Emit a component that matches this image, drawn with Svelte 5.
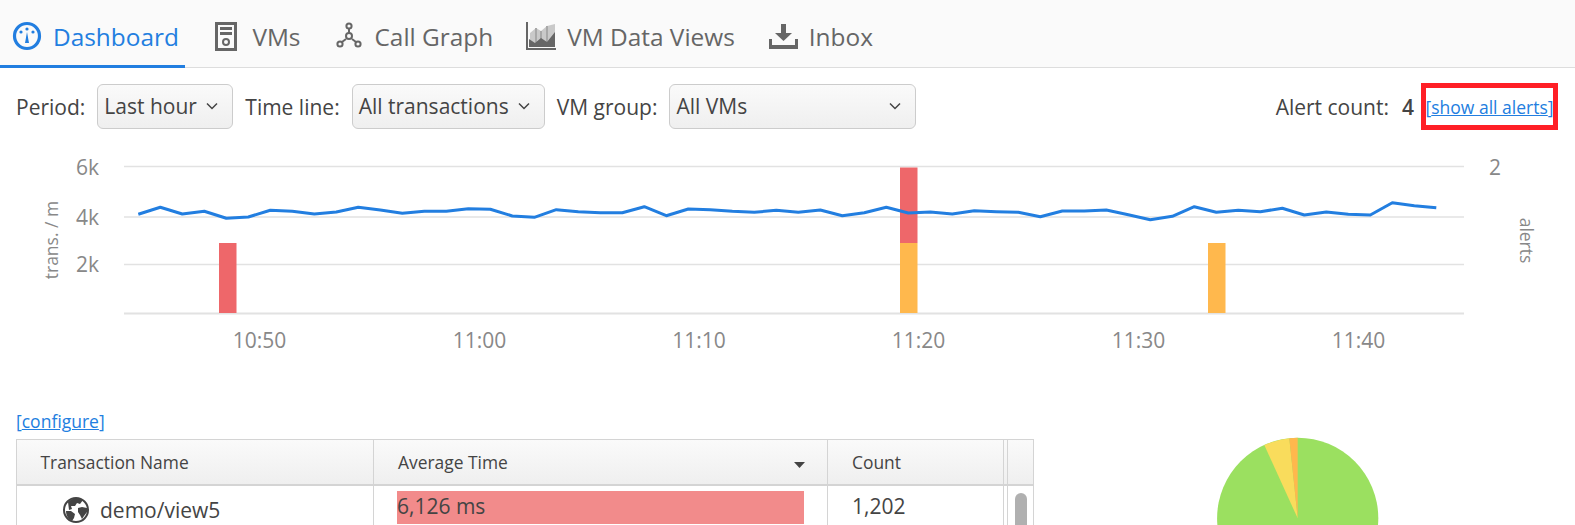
<script lang="ts">
	const tabs = ['Dashboard', 'VMs', 'Call Graph', 'VM Data Views', 'Inbox'];

	// sampled every minute, in page pixels
	const ys = [
		214.3, 207.3, 214, 211.3, 218.3, 217, 210.3, 211.3, 214, 212, 207.3, 210, 213.3, 211.3, 211.3,
		208.7, 209.3, 216, 217.3, 209.7, 211.7, 212.7, 212.7, 206.7, 215.7, 209, 209.7, 211.3, 212.3,
		210.3, 212.3, 210, 215.7, 212.7, 207.3, 213, 212, 214, 210.7, 211.7, 212.3, 216.7, 211, 211,
		210, 214.7, 219.7, 216.3, 206.7, 212.3, 210.3, 211.7, 208.3, 215, 212, 214.3, 215, 202.7,
		205.7, 207.7,
	];
	const points = ys.map((y, i) => `${(138.3 + i * 22).toFixed(1)},${y}`).join(' ');

	const grid = [166.5, 217, 264.5, 313.5];
	const yLabels = [
		{ t: '6k', y: 175 },
		{ t: '4k', y: 225 },
		{ t: '2k', y: 272 },
	];
	const xLabels = [
		{ t: '10:50', x: 259.5 },
		{ t: '11:00', x: 479.5 },
		{ t: '11:10', x: 699 },
		{ t: '11:20', x: 918.5 },
		{ t: '11:30', x: 1138.5 },
		{ t: '11:40', x: 1358.5 },
	];
	const bars = [
		{ x: 219, y: 243, h: 70, c: '#ee676a' },
		{ x: 900, y: 167.5, h: 75.5, c: '#ee676a' },
		{ x: 900, y: 243, h: 70, c: '#ffb84d' },
		{ x: 1208, y: 243, h: 70, c: '#ffb84d' },
	];
</script>

<div class="page">
	<nav class="tabs">
		{#each tabs as tab, i}
			<div class="tab" class:active={i === 0}>
				{#if i === 0}
					<svg class="icon" width="30" height="30" viewBox="0 0 30 30">
						<circle cx="15" cy="15" r="12.5" fill="none" stroke="#227ee0" stroke-width="3.2" />
						<circle cx="9" cy="11" r="1.6" fill="#227ee0" />
						<circle cx="15" cy="8" r="1.6" fill="#227ee0" />
						<circle cx="21" cy="11" r="1.6" fill="#227ee0" />
						<path d="M15 11 L17 22 H13 Z" fill="#227ee0" />
					</svg>
				{:else if i === 1}
					<svg class="icon" width="26.500" height="29" viewBox="0 0 26.500 29">
						<path fill="#666" fill-rule="evenodd" d="M0 0H22V29H0Z M3 3V26H19V3Z" />
						<rect x="5" y="5" width="12" height="3" fill="#666" />
						<rect x="5" y="10" width="12" height="3" fill="#666" />
						<circle cx="11" cy="20" r="3" fill="none" stroke="#666" stroke-width="2" />
					</svg>
				{:else if i === 2}
					<svg class="icon" width="27" height="28" viewBox="0 0 27 28">
						<g fill="none" stroke="#666" stroke-width="2">
							<path d="M13 7 V11 M10 17 L6 20 M16 17 L20 20" />
							<circle cx="13" cy="4" r="2.6" />
							<circle cx="13" cy="14" r="3" />
							<circle cx="4" cy="22" r="2.6" />
							<circle cx="22" cy="22" r="2.6" />
						</g>
					</svg>
				{:else if i === 3}
					<svg class="icon" width="30" height="28" viewBox="0 0 30 28">
						<path d="M4 11 L10 6 L15 9 L21 4 L29 2 V23 H4Z" fill="#c9c9c9" />
						<path d="M10 6V23 M15 9V23 M21 4V23" stroke="#a8a8a8" stroke-width="2" />
						<path d="M3 17 L9 21 L15 16 L21 20 L29 10 V25 H3Z" fill="#666" />
						<path d="M1 0 V27 H30" fill="none" stroke="#666" stroke-width="2" />
					</svg>
				{:else}
					<svg class="icon" width="29" height="25" viewBox="0 0 29 25">
						<path d="M12 0H17V9H23L14.500 17L6 9H12Z" fill="#666" />
						<path d="M0 15H3V21H26V15H29V25H0Z" fill="#666" />
					</svg>
				{/if}
				<span>{tab}</span>
			</div>
		{/each}
	</nav>

	<div class="toolbar">
		<label for="period">Period:</label>
		<div id="period" class="select period">Last hour<svg class="chev" width="12" height="8" viewBox="0 0 12 8"><path d="M1 1.500L6 6.500L11 1.500" fill="none" stroke="#444" stroke-width="1.500" /></svg></div>
		<label for="timeline">Time line:</label>
		<div id="timeline" class="select timeline">All transactions<svg class="chev" width="12" height="8" viewBox="0 0 12 8"><path d="M1 1.500L6 6.500L11 1.500" fill="none" stroke="#444" stroke-width="1.500" /></svg></div>
		<label for="group">VM group:</label>
		<div id="group" class="select group">All VMs<svg class="chev" width="12" height="8" viewBox="0 0 12 8"><path d="M1 1.500L6 6.500L11 1.500" fill="none" stroke="#444" stroke-width="1.500" /></svg></div>
		<div class="alerts">
			<span>Alert count:</span>
			<b>4</b>
			<div class="show-all"><span class="link">[<u>show all alerts</u>]</span></div>
		</div>
	</div>

	<svg class="chart" width="1575" height="269" viewBox="0 140 1575 269">
		{#each grid as y, i}
			<line x1="124" x2="1464" y1={y} y2={y} stroke="#e2e2e2" stroke-width={i === 3 ? 2 : 1.500} />
		{/each}
		{#each bars as b}
			<rect x={b.x} y={b.y} width="17.500" height={b.h} fill={b.c} />
		{/each}
		<polyline {points} fill="none" stroke="#227ee0" stroke-width="3" stroke-linejoin="round" />
		{#each yLabels as l}
			<text class="axis" x="99" y={l.y} text-anchor="end">{l.t}</text>
		{/each}
		<text class="axis" x="1489" y="175">2</text>
		{#each xLabels as l}
			<text class="axis" x={l.x} y="348" text-anchor="middle">{l.t}</text>
		{/each}
		<text class="axis side" transform="translate(58 240) rotate(-90)" text-anchor="middle">trans. / m</text>
		<text class="axis side" transform="translate(1520 240.500) rotate(90)" text-anchor="middle">alerts</text>
	</svg>

	<div class="lower">
		<div class="left">
			<div class="configure link">[<u>configure</u>]</div>
			<div class="table">
				<div class="row head">
					<div class="cell name">Transaction Name</div>
					<div class="cell avg">
						Average Time
						<svg width="11" height="6" viewBox="0 0 11 6"><path d="M0 0H11L5.500 6Z" fill="#444" /></svg>
					</div>
					<div class="cell count">Count</div>
					<div class="cell gap"></div>
					<div class="cell scroll"></div>
				</div>
				<div class="row body">
					<div class="cell name">
						<svg class="globe" width="26" height="26" viewBox="0 0 26 26">
							<circle cx="13" cy="13" r="12" fill="#fff" stroke="#444" stroke-width="2" />
							<path fill="#444" d="M5 5 C8 1 16 0 20 3 L17 7 L14 6 L12 9 L8 9 L9 12 L6 13 Z M3 14 L8 14 L12 17 L11 21 L9 24 L6 22 C4 20 3 17 3 14 Z M15 11 L19 10 L24 11 L24 15 L21 19 L19 22 L17 18 L15 15 Z" />
						</svg>
						demo/view5
					</div>
					<div class="cell avg"><div class="bar">6,126 ms</div></div>
					<div class="cell count">1,202</div>
					<div class="cell gap"></div>
					<div class="cell scroll"><div class="thumb"></div></div>
				</div>
			</div>
		</div>
		<svg class="pie" width="180" height="100" viewBox="1216 437 180 100">
			<circle cx="1296.700" cy="518.300" r="80.600" fill="#9be060" />
			<path d="M1296.700 518.300 L1263.300 445 A80.600 80.600 0 0 1 1288.300 438.200 Z" fill="#f9dc5c" />
			<path d="M1296.700 518.300 L1288.300 438.200 A80.600 80.600 0 0 1 1296.700 437.700 Z" fill="#ffb84d" />
		</svg>
	</div>
</div>

<style>
	:global(html), :global(body) {
		margin: 0;
		overflow: hidden;
	}

	.page {
		width: 1575px;
		height: 525px;
		overflow: hidden;
		background: #fff;
		color: #444;
		font-family: 'Open Sans', sans-serif;
		font-size: 21px;
	}

	.tabs {
		display: flex;
		height: 67px;
		gap: 18px;
		background: #fafafa;
		border-bottom: 1px solid #ddd;
	}

	.tab {
		display: flex;
		align-items: center;
		gap: 11px;
		padding: 4px 6px 0 12px;
		font-size: 24.400px;
		color: #666;
		margin-bottom: -1px;
		box-sizing: border-box;
	}

	.tab:nth-child(4) {
		margin-left: -3px;
	}

	.tab:nth-child(5) {
		margin-left: -2px;
	}

	.tab.active {
		color: #227ee0;
		border-bottom: 3px solid #227ee0;
		padding-top: 7px;
	}

	.icon {
		flex: none;
	}

	.toolbar {
		display: flex;
		align-items: center;
		height: 45px;
		margin-top: 16px;
		padding: 0 17px 0 16px;
	}

	.toolbar label {
		margin-right: 12px;
	}

	.select {
		display: flex;
		align-items: center;
		justify-content: space-between;
		box-sizing: border-box;
		height: 45px;
		padding: 0 14px 2px 6px;
		margin-right: 12px;
		border: 1px solid #ccc;
		border-radius: 6px;
		background: linear-gradient(#fafafa, #efefef);
	}

	.period { width: 136px; }
	.timeline { width: 193px; }
	.group { width: 247px; }

	.alerts {
		display: flex;
		align-items: center;
		margin-left: auto;
	}

	.alerts b {
		margin: 0 7px 0 13px;
		font-weight: 600;
	}

	.show-all {
		box-sizing: border-box;
		height: 47px;
		width: 137px;
		display: flex;
		align-items: center;
		justify-content: center;
		border: 5px solid #ff1f26;
		font-size: 17.500px;
	}

	.link {
		color: #227ee0;
		white-space: nowrap;
	}

	.chart {
		display: block;
		margin-top: 11px;
	}

	.axis {
		font-size: 21px;
		fill: #888;
	}

	.side {
		font-size: 17.500px;
	}

	.lower {
		display: flex;
	}

	.left {
		margin-left: 16px;
		width: 1018px;
	}

	.configure {
		font-size: 17.500px;
		line-height: 24px;
		height: 30px;
	}

	.table {
		border: 1px solid #d4d4d4;
		border-width: 1px 1px 0;
	}

	.row {
		display: flex;
	}

	.head {
		height: 46px;
		border-bottom: 2px solid #d4d4d4;
		box-sizing: border-box;
		background: linear-gradient(#fafafa, #efefef);
		font-size: 17.400px;
	}

	.cell {
		box-sizing: border-box;
		display: flex;
		align-items: center;
		border-right: 1px solid #d4d4d4;
	}

	.name { width: 357px; padding-left: 23.500px; }
	.avg { width: 454px; padding-left: 24px; }
	.count { width: 176px; padding-left: 24px; }
	.gap { width: 4px; }
	.scroll { flex: 1; border-right: 0; justify-content: center; }

	.head .avg {
		justify-content: space-between;
		padding-right: 22px;
	}

	.head svg {
		margin-top: 5px;
	}

	.body {
		height: 60px;
		align-items: stretch;
	}

	.body .cell {
		align-items: flex-start;
	}

	.body .name {
		padding-left: 46px;
		padding-top: 11px;
		gap: 11px;
		align-items: center;
		height: 60px;
		padding-bottom: 24px;
	}

	.globe {
		flex: none;
	}

	.body .count {
		padding-top: 6px;
	}

	.body .avg {
		padding-top: 5px;
		padding-left: 23px;
	}

	.bar {
		box-sizing: border-box;
		width: 407px;
		height: 33px;
		line-height: 30px;
		background: #f28b8b;
	}

	.thumb {
		width: 12px;
		height: 50px;
		margin-top: 7px;
		border-radius: 6px;
		background: #b0b0b0;
	}

	.pie {
		flex: none;
		margin-left: 183px;
		margin-top: 28px;
		display: block;
	}
</style>
